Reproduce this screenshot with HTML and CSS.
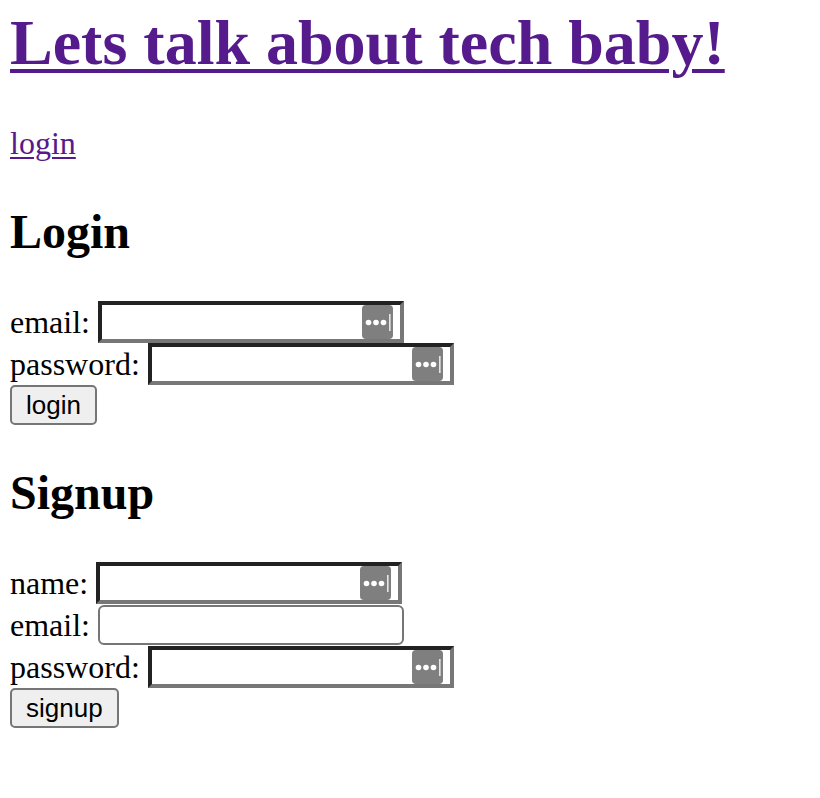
FILE: index.html
```html
<!DOCTYPE html>
<html lang="en">
<head>
<meta charset="utf-8">
<title>Lets talk about tech baby!</title>
<link rel="stylesheet" href="styles.css">
</head>
<body>
  <h1 class="site-title"><a href="#">Lets talk about tech baby!</a></h1>
  <p class="site-nav"><a href="#">login</a></p>

  <section class="auth-section">
    <h2 class="section-title">Login</h2>
    <form class="auth-form">
      <div class="row">
        <label class="label" for="login-email">email:</label>
        <span class="field">
          <input class="input input-key" id="login-email" type="text">
          <svg class="key-icon" width="31" height="34" viewBox="0 0 31 34"><rect width="31" height="34" rx="4" fill="#7f7f7f"/><circle cx="6.5" cy="17.5" r="2.8" fill="#fff"/><circle cx="14" cy="17.5" r="2.8" fill="#fff"/><circle cx="21.5" cy="17.5" r="2.8" fill="#fff"/><rect x="27" y="9" width="1.6" height="17" fill="#e6e6e6"/></svg>
        </span>
      </div>
      <div class="row">
        <label class="label" for="login-password">password:</label>
        <span class="field">
          <input class="input input-key" id="login-password" type="password">
          <svg class="key-icon" width="31" height="34" viewBox="0 0 31 34"><rect width="31" height="34" rx="4" fill="#7f7f7f"/><circle cx="6.5" cy="17.5" r="2.8" fill="#fff"/><circle cx="14" cy="17.5" r="2.8" fill="#fff"/><circle cx="21.5" cy="17.5" r="2.8" fill="#fff"/><rect x="27" y="9" width="1.6" height="17" fill="#e6e6e6"/></svg>
        </span>
      </div>
      <button class="button" type="button">login</button>
    </form>
  </section>

  <section class="auth-section">
    <h2 class="section-title">Signup</h2>
    <form class="auth-form">
      <div class="row">
        <label class="label" for="signup-name">name:</label>
        <span class="field">
          <input class="input input-key" id="signup-name" type="text">
          <svg class="key-icon" width="31" height="34" viewBox="0 0 31 34"><rect width="31" height="34" rx="4" fill="#7f7f7f"/><circle cx="6.5" cy="17.5" r="2.8" fill="#fff"/><circle cx="14" cy="17.5" r="2.8" fill="#fff"/><circle cx="21.5" cy="17.5" r="2.8" fill="#fff"/><rect x="27" y="9" width="1.6" height="17" fill="#e6e6e6"/></svg>
        </span>
      </div>
      <div class="row">
        <label class="label" for="signup-email">email:</label>
        <span class="field">
          <input class="input input-plain" id="signup-email" type="email">
        </span>
      </div>
      <div class="row">
        <label class="label" for="signup-password">password:</label>
        <span class="field">
          <input class="input input-key" id="signup-password" type="password">
          <svg class="key-icon" width="31" height="34" viewBox="0 0 31 34"><rect width="31" height="34" rx="4" fill="#7f7f7f"/><circle cx="6.5" cy="17.5" r="2.8" fill="#fff"/><circle cx="14" cy="17.5" r="2.8" fill="#fff"/><circle cx="21.5" cy="17.5" r="2.8" fill="#fff"/><rect x="27" y="9" width="1.6" height="17" fill="#e6e6e6"/></svg>
        </span>
      </div>
      <button class="button" type="button">signup</button>
    </form>
  </section>
</body>
</html>
```

FILE: styles.css
```css
html {
  background: #fff;
}

body {
  margin: 6px 10px;
  font-family: "Liberation Serif", "Times New Roman", serif;
  font-size: 32px;
  color: #000;
}

a {
  color: #551a8b;
}

.site-title {
  margin: 0;
  font-size: 64px;
  font-weight: bold;
  line-height: 74px;
}

.site-title a {
  text-decoration-thickness: 4px;
  text-underline-offset: 5px;
}

.site-nav {
  margin: 45px 0 42px;
  line-height: 37px;
}

.site-nav a {
  text-decoration-thickness: 2px;
  text-underline-offset: 3px;
}

.section-title {
  margin: 40px 0 42px;
  font-size: 48px;
  font-weight: bold;
  line-height: 55px;
}

.auth-form {
  display: flex;
  flex-direction: column;
  align-items: flex-start;
}

.row {
  display: flex;
  align-items: flex-end;
  gap: 8px;
}

.label {
  line-height: 37px;
  padding-bottom: 2px;
}

.field {
  position: relative;
  display: block;
}

.input {
  display: block;
  box-sizing: border-box;
  width: 306px;
  margin: 0;
  padding: 0 8px;
  background: #fff;
  font-family: "Liberation Sans", Arial, sans-serif;
  font-size: 26px;
  outline: none;
}

.input-key {
  height: 42px;
  border-style: solid;
  border-width: 4px;
  border-color: #222 #777 #777 #222;
  border-radius: 0;
}

.input-plain {
  height: 40px;
  margin: 1px 0;
  border: 2px solid #767676;
  border-radius: 6px;
}

.key-icon {
  position: absolute;
  top: 4px;
  right: 11px;
  display: block;
}

.button {
  box-sizing: border-box;
  height: 40px;
  margin: 0;
  padding: 0 14px;
  font-family: "Liberation Sans", Arial, sans-serif;
  font-size: 26px;
  line-height: 36px;
  color: #000;
  background: #efefef;
  border: 2px solid #767676;
  border-radius: 5px;
}
```
